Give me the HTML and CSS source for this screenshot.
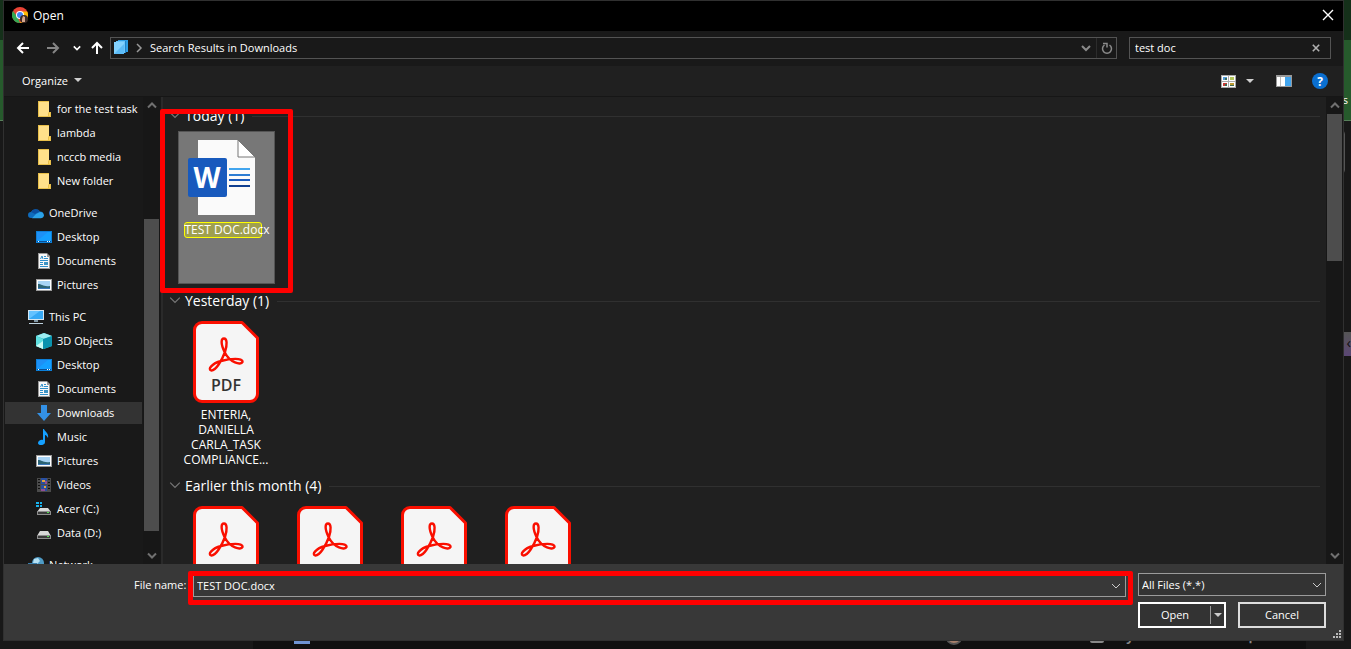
FILE: index.html
```html
<!DOCTYPE html>
<html lang="en">
<head>
    <meta charset="UTF-8">
    <meta name="viewport" content="width=device-width, initial-scale=1.0">
    <title>Open</title>
    <link rel="stylesheet" href="styles.css">
</head>
<body>
    <!-- shared icons -->
    <svg class="sprite" aria-hidden="true">
        <symbol id="i-folder" viewBox="0 0 16 16"><path d="M2 0h11v11h2v5H2z" fill="#e8bf4a"/><path d="M3 1h10v10l-1 1v3H3z" fill="#ffe08a"/><path d="M13 12h1v3h-1z" fill="#ffd660"/></symbol>
        <symbol id="i-onedrive" viewBox="0 0 16 16"><path d="M3 13a3 3 0 0 1 0-6 5 4.500 0 0 1 9-.5 3.300 3.300 0 0 1 1 6.500z" fill="#0f6cbd"/><path d="M3 7a5 4.500 0 0 1 9-.5L7 9z" fill="#0b4fa0"/><path d="M4 13.200l4-4.200 4-2c5 0 5 6.200 1 6.200z" fill="#2ba3ea"/></symbol>
        <symbol id="i-desktop" viewBox="0 0 16 16"><path d="M0 2h16v12H0z" fill="#0c7fd8"/><path d="M1 3h14v9H1z" fill="#15a0ff"/><path d="M1 12L12 3H1z" fill="#1e90f5"/><path d="M1 12h14v1H1z" fill="#0a4f94"/><path d="M2 12h1v1H2zM11 12h1v1h-1zM13 12h1v1h-1z" fill="#fff"/></symbol>
        <symbol id="i-doc" viewBox="0 0 16 16"><path d="M2 0h9l3 3v13H2z" fill="#9a9a9a"/><path d="M3 1h8v3h2v11H3z" fill="#f8f8f8"/><path d="M4.500 6L6 3l1 3M8 3.500h2M8 5.500h4M4 7.500h8M4 9.500h3M4 11.500h3M4 13.500h8" stroke="#2f8fca" fill="none"/><path d="M8 9h4v3H8z" fill="#3c93c4"/></symbol>
        <symbol id="i-picture" viewBox="0 0 16 16"><path d="M0 2h16v12H0z" fill="#9b9b9b"/><path d="M1 3h14v10H1z" fill="#fff"/><path d="M2 4h12v8H2z" fill="#a8d4f5"/><path d="M2 7c4 0 5 3 12 2v3H2z" fill="#2c6475"/><path d="M2 11h12v1H2z" fill="#3b79bc"/></symbol>
        <symbol id="i-pc" viewBox="0 0 16 16"><path d="M0 1h16v10H0z" fill="#d5e6f1"/><path d="M1 2h14v8H1z" fill="#36a9f5"/><path d="M1 10L12 2H1z" fill="#63c2ff"/><path d="M6 11h4v2H6z" fill="#8197a6"/><path d="M1 14h14v1H1z" fill="#bdd1de"/></symbol>
        <symbol id="i-cube" viewBox="0 0 16 16"><path d="M8 0l8 3v10l-8 3-8-3V3z" fill="#20b8c8"/><path d="M8 0l8 3-8 3-8-3z" fill="#9deef2"/><path d="M0 3l7 3v10l-7-3z" fill="#5fe0e0"/><path d="M0 13l7-5v8z" fill="#c8fbf5"/><path d="M7 6l9-3v10l-9 3z" fill="#0b93ae"/></symbol>
        <symbol id="i-download" viewBox="0 0 16 16"><path d="M5 0h6v8h4l-7 8-7-8h4z" fill="#3391e6"/></symbol>
        <symbol id="i-music" viewBox="0 0 16 16"><path d="M8 0c1 3 5 4 4 9-1-2-2-3-3-3v7c0 4-7 4-7 1 0-2 3-4 5-3V0z" fill="#15a0ff"/></symbol>
        <symbol id="i-video" viewBox="0 0 16 16"><path d="M1 1h14v14H1z" fill="#4b4b4b"/><path d="M2 2h2v1H2zM2 5h2v1H2zM2 8h2v1H2zM2 11h2v1H2zM12 2h2v1h-2zM12 5h2v1h-2zM12 8h2v1h-2zM12 11h2v1h-2z" fill="#111"/><path d="M5 1h6v6H5zM5 8h6v6H5z" fill="#294fa0"/><path d="M6 3h3v2H6zM8 9h2v2H8z" fill="#e3a33c"/><path d="M9 4h2v3H9zM5 12h4v2H5z" fill="#8f4e96"/></symbol>
        <symbol id="i-drive" viewBox="0 0 16 16"><path d="M4 6h8l3 5H1z" fill="#d9d9d9"/><path d="M1 10h14v4H1z" fill="#8e8e8e"/><path d="M2 11h12v2H2z" fill="#3b3b3b"/><path d="M11 11h2v1h-2z" fill="#4ee34e"/></symbol>
        <symbol id="i-drive-c" viewBox="0 0 16 16"><path d="M0 1h3v2H0zM4 1h2v2H4zM0 4h3v2H0zM4 4h2v2H4z" fill="#18b4ef"/><path d="M4 7h8l3 4H1z" fill="#d9d9d9"/><path d="M1 10h14v4H1z" fill="#8e8e8e"/><path d="M2 11h12v2H2z" fill="#3b3b3b"/><path d="M11 11h2v1h-2z" fill="#4ee34e"/></symbol>
        <symbol id="i-network" viewBox="0 0 16 16"><circle cx="10" cy="6" r="6" fill="#4e9bc6"/><path d="M6 2l4-1 2 3-4 4-3-2z" fill="#b5e0f3"/><path d="M0 6h9v7H0z" fill="#3a7fae"/></symbol>
        <symbol id="i-down" viewBox="0 0 10 10"><path d="M1 3l4 4 4-4" fill="none" stroke="currentColor"/></symbol>
        <symbol id="i-down-bold" viewBox="0 0 10 10"><path d="M1 3l4 4 4-4" fill="none" stroke="currentColor" stroke-width="2"/></symbol>
        <symbol id="i-up-bold" viewBox="0 0 10 10"><path d="M1 7l4-4 4 4" fill="none" stroke="currentColor" stroke-width="2"/></symbol>
        <symbol id="i-caret" viewBox="0 0 10 10"><path d="M1 3h8L5 7z" fill="currentColor"/></symbol>
        <symbol id="i-pdf" viewBox="0 0 66 82">
            <path d="M9 1.500h40L64.500 17v56a7.500 7.500 0 0 1-7.500 7.500H9A7.500 7.500 0 0 1 1.500 73V9A7.500 7.500 0 0 1 9 1.500z" fill="#f5f5f5" stroke="#fa0f00" stroke-width="3" stroke-linejoin="round"/>
            <path d="M31.500 31C27.500 22 28 17.500 31 17.500S34.500 23 32 31C29 39 23 49.500 18.500 49.500C14 48.500 19 42.500 28 40C37 37.500 50 36.500 49.500 41C48 44.500 37 42 31.500 31z" fill="none" stroke="#fa0f00" stroke-width="2.400"/>
            <text x="33" y="70" text-anchor="middle">PDF</text>
        </symbol>
    </svg>

    <!-- browser page that stays visible round the dialog -->
    <div class="backdrop" aria-hidden="true">
        <div class="banner-top"></div>
        <div class="banner"><span>s</span></div>
        <div class="page">
            <div class="page-button"></div>
            <div class="page-tab">‹</div>
        </div>
        <div class="doc-row">
            <span class="doc-icon"></span>
            <b>Untitled document</b>
            <span>You modified · 5:04 PM</span>
            <span class="avatar"></span>
            <span>me</span>
            <span class="drive-icon"></span>
            <b>My Drive</b>
            <b>⋮</b>
        </div>
    </div>

    <div class="dialog" role="dialog" aria-labelledby="dialog-title">
        <div class="title-bar">
            <svg class="chrome" viewBox="0 0 16 16">
                <circle cx="8" cy="8" r="8" fill="#ea4335"/>
                <path d="M1 4l4.500 6L8 16A8 8 0 0 1 1 4z" fill="#34a853"/>
                <path d="M8 16l3.500-6L10 4.500h5.200A8 8 0 0 1 8 16z" fill="#fbbc04"/>
                <circle cx="8" cy="8" r="4" fill="#fff"/><circle cx="8" cy="8" r="3" fill="#4285f4"/>
                <circle cx="12" cy="12" r="4" fill="#3b2a25"/><path d="M11 9l2 1v5h-3v-3z" fill="#d6a68c"/>
            </svg>
            <span id="dialog-title">Open</span>
            <button class="close" aria-label="Close"><svg viewBox="0 0 12 12"><path d="M1 1l10 10M11 1L1 11" stroke="#fff" stroke-width="1.400"/></svg></button>
        </div>

        <div class="nav-bar">
            <button class="nav-btn" aria-label="Back"><svg viewBox="0 0 14 14"><path d="M13 7H2M7 2L2 7l5 5" fill="none" stroke="#fff" stroke-width="2"/></svg></button>
            <button class="nav-btn" aria-label="Forward"><svg viewBox="0 0 14 14"><path d="M1 7h11M7 2l5 5-5 5" fill="none" stroke="#858585" stroke-width="2"/></svg></button>
            <button class="nav-btn small" aria-label="Recent locations"><svg viewBox="0 0 10 10"><use href="#i-down-bold"/></svg></button>
            <button class="nav-btn" aria-label="Up"><svg viewBox="0 0 14 14"><path d="M7 13V2M2 7l5-5 5 5" fill="none" stroke="#fff" stroke-width="2"/></svg></button>
            <div class="address">
                <svg class="icon" viewBox="0 0 16 16"><path d="M5 0h10v12H5z" fill="#2f9fe6"/><path d="M3 1h10v12H3z" fill="#6cc5fa"/><path d="M12 1h1v12h-1z" fill="#1f82c8"/><path d="M1 2h10v12H1z" fill="#83d2ff"/><path d="M1 14L11 4v10z" fill="#5cbcf8"/></svg>
                <svg class="crumb" viewBox="0 0 10 10"><path d="M3 1l4 4-4 4" fill="none" stroke="#999" stroke-width="1.500"/></svg>
                <span class="path">Search Results in Downloads</span>
                <button class="address-btn" aria-label="Previous locations"><svg viewBox="0 0 10 10"><use href="#i-down-bold"/></svg></button>
                <button class="address-btn refresh" aria-label="Refresh"><svg viewBox="0 0 12 12"><path d="M8.500 3a4.500 4.500 0 1 1-5 0M2 1.500h4v4" fill="none" stroke="currentColor" stroke-width="1.500"/></svg></button>
            </div>
            <div class="search">
                <input type="text" value="test doc" aria-label="Search">
                <button aria-label="Clear search"><svg viewBox="0 0 10 10"><path d="M1 1l8 8M9 1L1 9" stroke="#b0b0b0" stroke-width="2"/></svg></button>
            </div>
        </div>

        <div class="toolbar">
            <button class="organize">Organize <svg viewBox="0 0 10 10"><use href="#i-caret"/></svg></button>
            <button class="view" aria-label="Change view">
                <svg class="view-icon" viewBox="0 0 15 13"><path d="M0 0h15v13H0z" fill="#aaa"/><path d="M1 1h6v5H1zM8 1h6v5H8zM1 7h6v5H1zM8 7h6v5H8z" fill="#fff"/><path d="M2 2h4v3H2z" fill="#569cd8"/><path d="M9 2h4v3H9z" fill="#b2c65b"/><path d="M2 8h4v3H2z" fill="#c63c35"/><path d="M9 8h4v3H9z" fill="#bd9b32"/><path d="M4 3h2v2H4zM4 9h2v2H4zM9 10h4v1H9z" fill="#3d6b54"/></svg>
                <svg class="caret" viewBox="0 0 10 10"><use href="#i-caret"/></svg>
            </button>
            <button class="preview" aria-label="Show the preview pane"><svg viewBox="0 0 16 12"><path d="M0 0h16v12H0z" fill="#999"/><path d="M1 2h4v9H1zM5 2h4v9H5z" fill="#fff"/><path d="M4 2h1v9H4z" fill="#bbb"/><path d="M9 2h6v9H9z" fill="#42a5ee"/></svg></button>
            <button class="help" aria-label="Get help">?</button>
        </div>

        <div class="main">
            <nav class="tree">
                <ul>
                    <li><a href="#"><svg class="icon"><use href="#i-folder"/></svg>for the test task</a></li>
                    <li><a href="#"><svg class="icon"><use href="#i-folder"/></svg>lambda</a></li>
                    <li><a href="#"><svg class="icon"><use href="#i-folder"/></svg>ncccb media</a></li>
                    <li><a href="#"><svg class="icon"><use href="#i-folder"/></svg>New folder</a></li>
                </ul>
                <ul>
                    <li class="root"><a href="#"><svg class="icon"><use href="#i-onedrive"/></svg>OneDrive</a></li>
                    <li><a href="#"><svg class="icon"><use href="#i-desktop"/></svg>Desktop</a></li>
                    <li><a href="#"><svg class="icon"><use href="#i-doc"/></svg>Documents</a></li>
                    <li><a href="#"><svg class="icon"><use href="#i-picture"/></svg>Pictures</a></li>
                </ul>
                <ul>
                    <li class="root"><a href="#"><svg class="icon"><use href="#i-pc"/></svg>This PC</a></li>
                    <li><a href="#"><svg class="icon"><use href="#i-cube"/></svg>3D Objects</a></li>
                    <li><a href="#"><svg class="icon"><use href="#i-desktop"/></svg>Desktop</a></li>
                    <li><a href="#"><svg class="icon"><use href="#i-doc"/></svg>Documents</a></li>
                    <li class="selected"><a href="#"><svg class="icon"><use href="#i-download"/></svg>Downloads</a></li>
                    <li><a href="#"><svg class="icon"><use href="#i-music"/></svg>Music</a></li>
                    <li><a href="#"><svg class="icon"><use href="#i-picture"/></svg>Pictures</a></li>
                    <li><a href="#"><svg class="icon"><use href="#i-video"/></svg>Videos</a></li>
                    <li><a href="#"><svg class="icon"><use href="#i-drive-c"/></svg>Acer (C:)</a></li>
                    <li><a href="#"><svg class="icon"><use href="#i-drive"/></svg>Data (D:)</a></li>
                </ul>
                <ul>
                    <li class="root"><a href="#"><svg class="icon"><use href="#i-network"/></svg>Network</a></li>
                </ul>
            </nav>
            <div class="scrollbar tree-scroll">
                <svg viewBox="0 0 10 10"><use href="#i-up-bold"/></svg>
                <div class="track"><div class="thumb"></div></div>
                <svg viewBox="0 0 10 10"><use href="#i-down-bold"/></svg>
            </div>

            <div class="files">
                <section>
                    <h2><svg viewBox="0 0 10 10"><use href="#i-down"/></svg>Today (1)</h2>
                    <div class="tiles">
                        <div class="tile selected">
                            <svg class="word" viewBox="0 0 68 76">
                                <path d="M10 0h40l17 17v58H10z" fill="#fafafa"/>
                                <path d="M50 0v17h17z" fill="#fff" stroke="#777"/>
                                <path d="M41 29h21" stroke="#41a5ee" stroke-width="2"/>
                                <path d="M41 35h21" stroke="#2b7cd3" stroke-width="2"/>
                                <path d="M41 40h21" stroke="#185abd" stroke-width="2"/>
                                <path d="M41 46h21" stroke="#103f91" stroke-width="2"/>
                                <rect y="18" width="39" height="39" rx="2" fill="#185abd"/>
                                <text x="19" y="48" text-anchor="middle">W</text>
                            </svg>
                            <span class="name"><mark>TEST DOC.docx</mark></span>
                        </div>
                    </div>
                </section>
                <section>
                    <h2><svg viewBox="0 0 10 10"><use href="#i-down"/></svg>Yesterday (1)</h2>
                    <div class="tiles">
                        <div class="tile">
                            <svg class="pdf"><use href="#i-pdf"/></svg>
                            <span class="name">ENTERIA,<br>DANIELLA<br>CARLA_TASK<br>COMPLIANCE...</span>
                        </div>
                    </div>
                </section>
                <section>
                    <h2><svg viewBox="0 0 10 10"><use href="#i-down"/></svg>Earlier this month (4)</h2>
                    <div class="tiles">
                        <div class="tile"><svg class="pdf"><use href="#i-pdf"/></svg></div>
                        <div class="tile"><svg class="pdf"><use href="#i-pdf"/></svg></div>
                        <div class="tile"><svg class="pdf"><use href="#i-pdf"/></svg></div>
                        <div class="tile"><svg class="pdf"><use href="#i-pdf"/></svg></div>
                    </div>
                </section>
            </div>
            <div class="scrollbar files-scroll">
                <svg viewBox="0 0 10 10"><use href="#i-up-bold"/></svg>
                <div class="track"><div class="thumb"></div></div>
                <svg viewBox="0 0 10 10"><use href="#i-down-bold"/></svg>
            </div>
            <div class="callout file-callout"></div>
        </div>

        <div class="footer">
            <label for="file-name">File name:</label>
            <div class="combo">
                <input type="text" id="file-name" value="TEST DOC.docx">
                <svg viewBox="0 0 10 10"><use href="#i-down"/></svg>
                <div class="callout name-callout"></div>
            </div>
            <div class="actions">
                <div class="type">
                    <select aria-label="File type"><option>All Files (*.*)</option></select>
                    <svg viewBox="0 0 10 10"><use href="#i-down"/></svg>
                </div>
                <div class="buttons">
                    <div class="split">
                        <button>Open</button>
                        <button class="more" aria-label="More open options"><svg viewBox="0 0 10 10"><use href="#i-caret"/></svg></button>
                    </div>
                    <button class="cancel">Cancel</button>
                </div>
            </div>
            <svg class="grip" viewBox="0 0 10 10"><path d="M7 0h2v2H7zM7 3h2v2H7zM7 6h2v2H7zM4 3h2v2H4zM4 6h2v2H4zM1 6h2v2H1z" fill="#bbb"/></svg>
        </div>
    </div>
</body>
</html>
```
FILE: styles.css
```css
* {
    box-sizing: border-box;
}

body {
    margin: 0;
    height: 100vh;
    display: flex;
    overflow: hidden;
    background-color: #101010;
    color: #fff;
    font-family: "Open Sans", "Noto Sans", sans-serif;
    font-size: 11px;
    line-height: 15px;
}

button,
input,
select {
    margin: 0;
    padding: 0;
    border: none;
    background: none;
    color: inherit;
    font: inherit;
}

button {
    display: flex;
    align-items: center;
    justify-content: center;
    cursor: pointer;
}

svg {
    flex: none;
    width: 10px;
    height: 10px;
}

.sprite {
    position: absolute;
    width: 0;
    height: 0;
}

.icon {
    width: 16px;
    height: 16px;
}

/* page behind the dialog */
.backdrop {
    position: absolute;
    inset: 0;
    display: flex;
    flex-direction: column;
    overflow: hidden;
    background-color: #181818;
}

.banner-top {
    height: 40px;
    background-color: #15301a;
}

.banner {
    height: 81px;
    padding-top: 52px;
    background-color: #265a2c;
    border-bottom: 1px solid #57805a;
    text-align: right;
}

.banner span {
    padding-right: 3px;
}

.page {
    flex: 1;
    display: flex;
    flex-direction: column;
    align-items: flex-end;
}

.page-button {
    width: 40px;
    height: 44px;
    margin: 9px 6px 0 0;
    border: 1px solid #555;
    border-radius: 4px;
}

.page-tab {
    width: 20px;
    height: 24px;
    margin-top: 158px;
    background: linear-gradient(#555, #5b4775);
    color: #111;
    font-size: 15px;
    line-height: 20px;
    text-align: right;
}

.doc-row {
    display: grid;
    grid-template-columns: 36px 355px 260px 27px 118px 24px 130px 1fr;
    align-items: center;
    height: 26px;
    margin: 0 45px 0 253px;
    padding-left: 41px;
    background-color: #101010;
    color: #888;
    font-size: 13px;
}

.doc-icon {
    width: 16px;
    height: 16px;
    background-color: #6f94d3;
}

.avatar {
    width: 18px;
    height: 18px;
    border: 2px solid #555;
    border-radius: 50%;
    background-color: #a77f6a;
}

.drive-icon {
    width: 14px;
    height: 14px;
    border: 2px solid #888;
    border-radius: 2px;
}

/* dialog */
.dialog {
    position: relative;
    flex: 1;
    display: flex;
    flex-direction: column;
    min-width: 0;
    margin: 0 7px 8px 3px;
    border: 1px solid #303030;
    background-color: #191919;
}

.title-bar {
    display: flex;
    align-items: center;
    gap: 5px;
    height: 30px;
    padding: 0 9px 2px 8px;
    background-color: #000;
    font-size: 12px;
}

.chrome {
    width: 16px;
    height: 16px;
}

.close {
    margin-left: auto;
}

.close svg {
    width: 12px;
    height: 12px;
}

.nav-bar {
    display: flex;
    align-items: center;
    height: 35px;
    padding: 0 12px 2px 9px;
}

.nav-btn {
    width: 20px;
    height: 22px;
    margin-right: 10px;
}

.nav-btn svg {
    width: 14px;
    height: 14px;
}

.nav-btn.small {
    width: 8px;
    margin-right: 6px;
}

.nav-btn.small svg {
    width: 8px;
    height: 8px;
}

.nav-btn:nth-child(4) {
    margin-right: 3px;
}

.address,
.search {
    display: flex;
    align-items: center;
    height: 22px;
    border: 1px solid #535353;
}

.address {
    flex: 1;
    padding-left: 2px;
}

.crumb {
    margin: 0 6px 0 5px;
}

.path {
    flex: 1;
}

.address-btn {
    width: 20px;
    height: 20px;
    color: #8a8a8a;
}

.refresh {
    border-left: 1px solid #2c2c2c;
}

.refresh svg {
    width: 12px;
    height: 12px;
}

.search {
    width: 202px;
    margin-left: 12px;
    padding: 0 10px 0 5px;
}

.search input {
    flex: 1;
    min-width: 0;
    outline: none;
}

.search svg {
    width: 8px;
    height: 8px;
}

.toolbar {
    display: flex;
    align-items: center;
    height: 31px;
    padding: 0 15px 0 18px;
    background-color: #202020;
    border-bottom: 1px solid #161616;
}

.organize {
    gap: 5px;
    margin-right: auto;
    padding-bottom: 2px;
}

.view {
    gap: 9px;
    margin-right: 21px;
}

.view-icon {
    width: 15px;
    height: 13px;
}

.caret,
.organize svg {
    color: #d0d0d0;
}

.preview {
    margin-right: 20px;
}

.preview svg {
    width: 16px;
    height: 12px;
}

.help {
    width: 16px;
    height: 16px;
    border-radius: 50%;
    background-color: #0a6fd0;
    font-size: 12px;
    font-weight: bold;
}

.main {
    position: relative;
    flex: 1;
    display: flex;
    min-height: 0;
}

.tree {
    width: 139px;
    overflow: hidden;
}

.tree ul {
    margin: 0 0 8px;
    padding: 0;
    list-style: none;
}

.tree li {
    height: 24px;
    padding: 1px;
}

.tree a {
    display: flex;
    align-items: center;
    gap: 5px;
    height: 22px;
    padding: 0 0 2px 31px;
    color: inherit;
    text-decoration: none;
    white-space: nowrap;
}

.tree .icon {
    margin-top: 2px;
}

.tree .root a {
    padding-left: 23px;
}

.tree .selected a {
    background-color: #333;
}

.scrollbar {
    display: flex;
    flex-direction: column;
    align-items: center;
    width: 17px;
    background-color: #171717;
    color: #707070;
}

.scrollbar svg {
    height: 17px;
}

.track {
    flex: 1;
    width: 15px;
}

.thumb {
    height: 100%;
    background-color: #4d4d4d;
}

.tree-scroll .track {
    padding: 105px 0 16px;
}

.files-scroll .thumb {
    height: 34%;
}

.files {
    flex: 1;
    min-width: 0;
    overflow: hidden;
    margin-left: 1px;
    padding: 4px 6px 0 6px;
    border-left: 2px solid #2a2a2a;
    background-color: #202020;
}

.files section {
    height: 185px;
}

.files h2 {
    display: flex;
    align-items: center;
    height: 30px;
    margin: 0;
    padding-bottom: 2px;
    font-size: 14px;
    font-weight: normal;
}

.files h2 svg {
    width: 12px;
    height: 12px;
    margin-right: 4px;
    color: #777;
}

.files h2::after {
    content: "";
    flex: 1;
    height: 1px;
    margin: 2px 0 0 8px;
    background-color: #303030;
}

.tiles {
    display: flex;
    gap: 7px;
    padding-left: 9px;
}

.tile {
    display: flex;
    flex-direction: column;
    align-items: center;
    width: 97px;
    height: 153px;
    padding: 5px 1px 0 0;
}

.tile.selected {
    padding: 8px 0 0;
    border: 1px solid #555;
    background-color: #777;
}

.pdf {
    width: 66px;
    height: 82px;
}

#i-pdf text {
    fill: #333;
    font-size: 16px;
    font-weight: 600;
}

.word {
    width: 68px;
    height: 76px;
    margin-right: 10px;
}

.word text {
    fill: #fff;
    font-size: 28px;
    font-weight: bold;
}

.name {
    margin-top: 4px;
    font-size: 12px;
    text-align: center;
}

.selected .name {
    width: 86px;
    margin-top: 6px;
}

.name mark {
    display: block;
    width: 78px;
    height: 16px;
    border: 1px solid #ff0;
    border-radius: 3px;
    background-color: rgba(200, 200, 40, 0.5);
    color: #fff;
    line-height: 14px;
    text-align: left;
    white-space: nowrap;
}

/* red marker boxes */
.callout {
    position: absolute;
    border: 5px solid #f00;
    border-radius: 2px;
    pointer-events: none;
}

.file-callout {
    left: 156px;
    top: 12px;
    width: 133px;
    height: 184px;
}

.name-callout {
    inset: -5px -8px -9px -6px;
}

.footer {
    position: relative;
    display: flex;
    height: 76px;
    padding: 9px 17px 0 130px;
    background-color: #383838;
}

.footer label {
    padding-top: 4px;
    width: 59px;
    white-space: nowrap;
}

.combo {
    position: relative;
    flex: 1;
    display: flex;
    align-items: center;
    height: 22px;
    margin: 2px 12px 0 0;
    padding: 0 4px 0 3px;
    border: 1px solid #9b9b9b;
    background-color: #383838;
}

.combo input {
    flex: 1;
    padding-bottom: 2px;
    outline: none;
}

.combo svg,
.type svg {
    color: #ccc;
}

.actions {
    width: 188px;
}

.type {
    display: flex;
    align-items: center;
    height: 23px;
    padding: 0 3px;
    border: 1px solid #9b9b9b;
    background-color: #333;
}

.type select {
    flex: 1;
    appearance: none;
    outline: none;
}

.buttons {
    display: flex;
    justify-content: space-between;
    margin-top: 6px;
}

.split,
.cancel {
    width: 88px;
    height: 26px;
    border: 2px solid #fff;
    background-color: #333;
}

.cancel {
    padding-bottom: 2px;
    border-color: #ddd;
}

.split {
    display: flex;
    align-items: center;
}

.split button {
    flex: 1;
    padding-bottom: 2px;
}

.split .more {
    flex: none;
    width: 14px;
    height: 18px;
    padding: 0;
    border-left: 1px solid #999;
    color: #ccc;
}

.grip {
    position: absolute;
    right: 1px;
    bottom: 0;
}
```
